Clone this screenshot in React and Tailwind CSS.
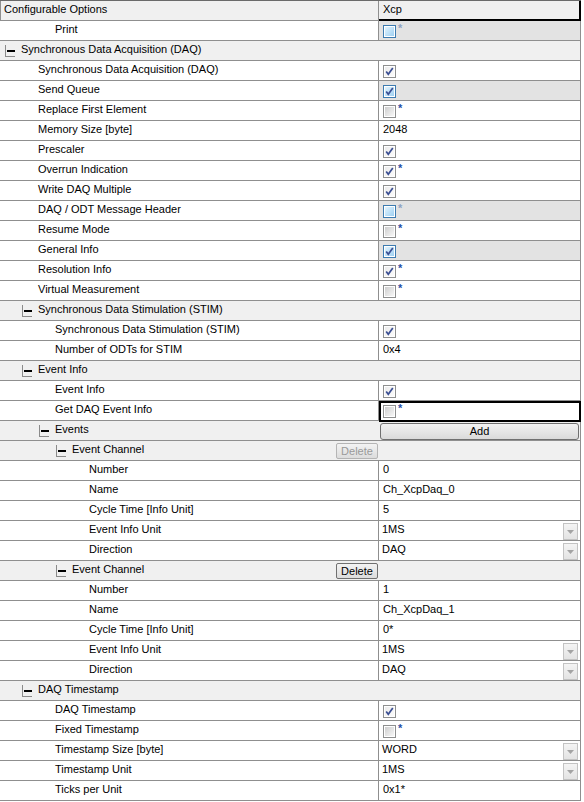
import React from 'react';

const FONT = { fontFamily: '"Liberation Sans", Arial, sans-serif' };

const ROWS = [
  { label: 'Print', x: 55, v: { kind: 'check', blue: true, star: true }, hl: true },
  { group: true, label: 'Synchronous Data Acquisition (DAQ)', box: 5 },
  { label: 'Synchronous Data Acquisition (DAQ)', x: 38, v: { kind: 'check', checked: true } },
  { label: 'Send Queue', x: 38, v: { kind: 'check', checked: true, blue: true }, hl: true },
  { label: 'Replace First Element', x: 38, v: { kind: 'check', star: true } },
  { label: 'Memory Size [byte]', x: 38, v: { kind: 'text', text: '2048' } },
  { label: 'Prescaler', x: 38, v: { kind: 'check', checked: true } },
  { label: 'Overrun Indication', x: 38, v: { kind: 'check', checked: true, star: true } },
  { label: 'Write DAQ Multiple', x: 38, v: { kind: 'check', checked: true } },
  { label: 'DAQ / ODT Message Header', x: 38, v: { kind: 'check', blue: true, star: true }, hl: true },
  { label: 'Resume Mode', x: 38, v: { kind: 'check', star: true } },
  { label: 'General Info', x: 38, v: { kind: 'check', checked: true, blue: true }, hl: true },
  { label: 'Resolution Info', x: 38, v: { kind: 'check', checked: true, star: true } },
  { label: 'Virtual Measurement', x: 38, v: { kind: 'check', star: true } },
  { group: true, label: 'Synchronous Data Stimulation (STIM)', box: 22 },
  { label: 'Synchronous Data Stimulation (STIM)', x: 55, v: { kind: 'check', checked: true } },
  { label: 'Number of ODTs for STIM', x: 55, v: { kind: 'text', text: '0x4' } },
  { group: true, label: 'Event Info', box: 22 },
  { label: 'Event Info', x: 55, v: { kind: 'check', checked: true } },
  { label: 'Get DAQ Event Info', x: 55, v: { kind: 'check', star: true }, focus: true },
  { group: true, label: 'Events', box: 39, add: true },
  { group: true, label: 'Event Channel', box: 56, del: 'disabled' },
  { label: 'Number', x: 89, v: { kind: 'text', text: '0' } },
  { label: 'Name', x: 89, v: { kind: 'text', text: 'Ch_XcpDaq_0' } },
  { label: 'Cycle Time [Info Unit]', x: 89, v: { kind: 'text', text: '5' } },
  { label: 'Event Info Unit', x: 89, v: { kind: 'select', text: '1MS' } },
  { label: 'Direction', x: 89, v: { kind: 'select', text: 'DAQ' } },
  { group: true, label: 'Event Channel', box: 56, del: 'enabled' },
  { label: 'Number', x: 89, v: { kind: 'text', text: '1' } },
  { label: 'Name', x: 89, v: { kind: 'text', text: 'Ch_XcpDaq_1' } },
  { label: 'Cycle Time [Info Unit]', x: 89, v: { kind: 'text', text: '0*' } },
  { label: 'Event Info Unit', x: 89, v: { kind: 'select', text: '1MS' } },
  { label: 'Direction', x: 89, v: { kind: 'select', text: 'DAQ' } },
  { group: true, label: 'DAQ Timestamp', box: 22 },
  { label: 'DAQ Timestamp', x: 55, v: { kind: 'check', checked: true } },
  { label: 'Fixed Timestamp', x: 55, v: { kind: 'check', star: true } },
  { label: 'Timestamp Size [byte]', x: 55, v: { kind: 'select', text: 'WORD' } },
  { label: 'Timestamp Unit', x: 55, v: { kind: 'select', text: '1MS' } },
  { label: 'Ticks per Unit', x: 55, v: { kind: 'text', text: '0x1*' } },
];

function Check({ checked, blue }) {
  const border = blue ? '#3c7bb0' : '#8e8f8f';
  const id = blue ? 'cb-blue' : checked ? 'cb-grayc' : 'cb-gray';
  const from = blue ? '#e2f4fe' : checked ? '#ececec' : '#cfcfcf';
  const to = blue ? '#9fd0f2' : checked ? '#fbfbfb' : '#f7f7f7';
  return (
    <svg width="13" height="13" viewBox="0 0 13 13" className="shrink-0">
      <defs>
        <linearGradient id={id} x1="0" y1="0" x2="1" y2="1">
          <stop offset="0" stopColor={from} />
          <stop offset="1" stopColor={to} />
        </linearGradient>
      </defs>
      <rect x="0.5" y="0.5" width="12" height="12" fill="#ffffff" stroke={border} />
      <rect x="2" y="2" width="9" height="9" fill={`url(#${id})`} />
      {checked && (
        <path d="M3.2 6.4 L5.3 9.2 L9.8 3" fill="none" stroke="#3b4f93" strokeWidth="1.7" />
      )}
    </svg>
  );
}

function Minus() {
  return (
    <span className="flex flex-col w-[10px] h-[12px] mt-[4px] border-l border-b border-[#8a8a8a] shrink-0">
      <span className="block ml-[1px] mt-[5px] w-[8px] h-[2px] bg-black" />
    </span>
  );
}

function Value({ v, hl }) {
  if (v.kind === 'check') {
    return (
      <div className="flex items-start pl-[4px] pt-[4px]">
        <Check checked={v.checked} blue={v.blue} />
        {v.star && (
          <span
            className={`ml-[2px] -mt-[2px] text-[11px] leading-[11px] font-bold ${hl ? 'text-[#8fa3c4]' : 'text-[#1f4fa5]'}`}
          >
            *
          </span>
        )}
      </div>
    );
  }
  if (v.kind === 'select') {
    return (
      <div className="flex items-start justify-between h-full">
        <span className="pl-[3px] leading-[17px]">{v.text}</span>
        <span className="mt-[2px] mr-[2px] w-[15px] h-[17px] border border-[#c3c3c3] bg-gradient-to-b from-[#f4f4f4] to-[#e3e3e3] flex items-center justify-center">
          <svg width="7" height="4" viewBox="0 0 7 4">
            <path d="M0 0 H7 L3.5 4 Z" fill="#a3a3a3" />
          </svg>
        </span>
      </div>
    );
  }
  return <div className="pl-[4px] leading-[17px]">{v.text}</div>;
}

function Row({ r }) {
  if (r.group) {
    return (
      <div className="flex h-[20px] bg-[#f0f0f0] border-b border-r border-[#8f8f8f]">
        <div className="w-[379px] shrink-0 flex items-start">
          <div className="flex items-start" style={{ paddingLeft: r.box }}>
            <Minus />
            <span className="ml-[6px] leading-[17px]">{r.label}</span>
          </div>
          {r.del && (
            <button
              className={`ml-auto mr-[1px] mt-[2px] w-[42px] h-[16px] rounded-[2px] border bg-gradient-to-b from-[#f3f3f3] to-[#dcdcdc] text-[11px] leading-[14px] ${
                r.del === 'disabled' ? 'border-[#b5b5b5] text-[#9a9a9a]' : 'border-[#707070] text-black'
              }`}
            >
              Delete
            </button>
          )}
        </div>
        <div className="flex-1 flex items-start">
          {r.add && (
            <button className="ml-[1px] mt-[2px] w-[199px] h-[17px] rounded-[3px] border border-[#707070] bg-gradient-to-b from-[#f2f2f2] to-[#dadada] text-[11px] leading-[15px] text-black">
              Add
            </button>
          )}
        </div>
      </div>
    );
  }
  return (
    <div className="flex h-[20px] border-b border-[#8f8f8f]">
      <div className="w-[379px] shrink-0 border-r border-[#8f8f8f] bg-white">
        <div className="leading-[17px]" style={{ paddingLeft: r.x }}>
          {r.label}
        </div>
      </div>
      <div className={`relative w-[202px] shrink-0 border-r border-[#8f8f8f] ${r.hl ? 'bg-[#e3e3e3]' : 'bg-white'}`}>
        <Value v={r.v} hl={r.hl} />
        {r.focus && <span className="absolute left-0 top-0 right-[-1px] bottom-[-2px] border-2 border-black" />}
      </div>
    </div>
  );
}

export default function App() {
  return (
    <div className="w-[584px] h-[802px] bg-white text-[11px] text-black overflow-hidden" style={FONT}>
      <div className="w-[581px]">
        <div className="flex h-[21px] bg-[#f0f0f0] border-t border-[#6a6a6a]">
          <div className="w-[379px] shrink-0 border-l border-r border-b border-[#8f8f8f] pl-[3px] leading-[17px]">
            Configurable Options
          </div>
          <div className="w-[202px] shrink-0 border-r-2 border-b-2 border-black pl-[4px] leading-[17px]">
            Xcp
          </div>
        </div>
        {ROWS.map((r, i) => (
          <Row key={i} r={r} />
        ))}
      </div>
    </div>
  );
}
